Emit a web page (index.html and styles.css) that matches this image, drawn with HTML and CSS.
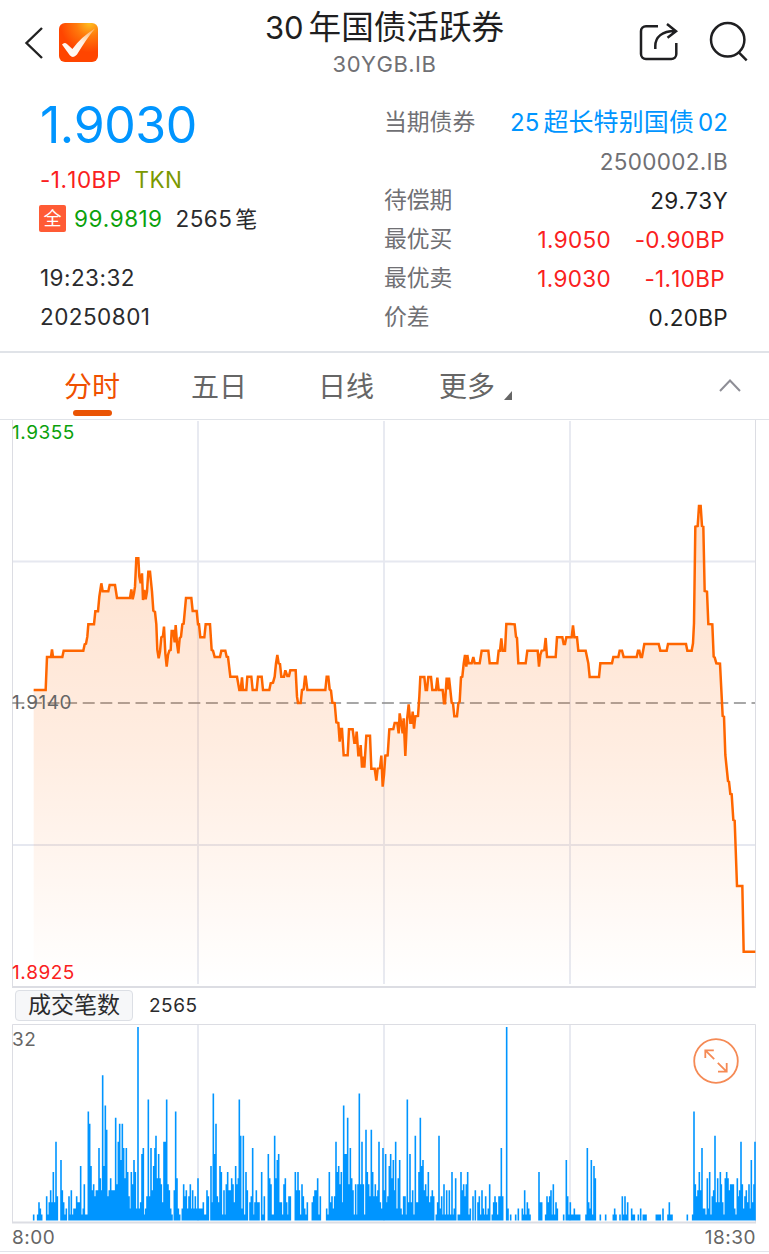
FILE: index.html
```html
<!DOCTYPE html>
<html lang="zh-CN">
<head>
<meta charset="utf-8">
<title>30年国债活跃券</title>
<link rel="stylesheet" href="styles.css">
</head>
<body>
<header class="topbar">
  <div class="nav-left">
    <svg class="back" viewBox="0 0 20 34"><path d="M18 2 2.5 17 18 32"/></svg>
    <svg class="logo" viewBox="0 0 39 39">
      <defs>
        <radialGradient id="logoBg" cx=".78" cy="0" r=".75"><stop offset="0" stop-color="#ffc020"/><stop offset=".45" stop-color="#ff7a0c"/><stop offset="1" stop-color="#ff4500"/></radialGradient>
        <linearGradient id="tick" x1="0" y1="1" x2=".8" y2="0"><stop offset="0" stop-color="#fff"/><stop offset=".6" stop-color="#fff0e4"/><stop offset="1" stop-color="#ffb870"/></linearGradient>
      </defs>
      <rect width="39" height="39" rx="6" fill="url(#logoBg)"/>
      <path d="M3 21.5Q5.5 18.6 8.2 21.2L13.4 26Q22 14 36 5.5 28 15 18 31.5Q14.2 36 10.8 32.3Z" fill="url(#tick)"/>
    </svg>
  </div>
  <div class="heading">
    <h1 class="title"><span class="num">30</span>年国债活跃券</h1>
    <div class="code">30YGB.IB</div>
  </div>
  <div class="nav-right">
    <svg class="share" viewBox="0 0 40 40"><path d="M19 4.2H7A5 5 0 0 0 2 9.2V32A5 5 0 0 0 7 37H32.3A5 5 0 0 0 37.3 32V21M16.3 27V24C16.3 15 23 9 36 9M28 2 37 9.2 28.5 15.8"/></svg>
    <svg class="search" viewBox="0 0 40 40"><circle cx="18.7" cy="17.8" r="16.7"/><path d="M29.5 30.2 37.7 38.4"/></svg>
  </div>
</header>

<section class="quote">
  <div class="summary">
    <div class="price">1.9030</div>
    <div class="row change"><span class="red">-1.10BP</span><span class="olive">TKN</span></div>
    <div class="row deals"><span class="badge">全</span><span class="green">99.9819</span><span class="count">2565<span class="cjk">笔</span></span></div>
    <div class="row time">19:23:32</div>
    <div class="row date">20250801</div>
  </div>
  <div class="details">
    <div class="line"><span class="label">当期债券</span><span class="bond">25<span class="bond-name">超长特别国债</span>02</span></div>
    <div class="line end"><span class="value muted">2500002.IB</span></div>
    <div class="line"><span class="label">待偿期</span><span class="value">29.73Y</span></div>
    <div class="line bid"><span class="label">最优买</span><span class="value rate">1.9050</span><span class="value bp">-0.90BP</span></div>
    <div class="line bid"><span class="label">最优卖</span><span class="value rate">1.9030</span><span class="value bp">-1.10BP</span></div>
    <div class="line"><span class="label">价差</span><span class="value">0.20BP</span></div>
  </div>
</section>

<nav class="tabs">
  <a class="tab active">分时</a>
  <a class="tab">五日</a>
  <a class="tab">日线</a>
  <a class="tab more">更多<svg class="corner" viewBox="0 0 8 9"><path d="M8 0V9H0Z"/></svg></a>
  <svg class="collapse" viewBox="0 0 22 13"><path d="M1 12 11 1.5 21 12"/></svg>
</nav>

<section class="price-chart">
  <svg class="plot" viewBox="0 419 769 570">
    <defs><linearGradient id="area" gradientUnits="userSpaceOnUse" x1="0" y1="505" x2="0" y2="985"><stop offset="0" stop-color="#ff6600" stop-opacity=".2"/><stop offset=".5" stop-color="#ff6600" stop-opacity=".12"/><stop offset="1" stop-color="#ff6600" stop-opacity="0"/></linearGradient></defs>
    <path class="grid" d="M13 561.5H755M13 845H755M198 421V984M384 421V984M570 421V984"/>
    <path class="frame" d="M12.5 420V987M755.5 420V987"/>
    <path class="frame thick" d="M12 987H756"/>
    <path class="baseline" d="M12.3 703H755"/>
    <path id="fill" fill="url(#area)"/>
    <path id="line" class="price-line"/>
  </svg>
  <span class="axis high">1.9355</span>
  <span class="axis mid">1.9140</span>
  <span class="axis low">1.8925</span>
</section>

<div class="indicator"><span class="chip">成交笔数</span><span class="total">2565</span></div>

<section class="volume-chart">
  <svg class="plot" viewBox="0 1024 769 200">
    <path class="grid" d="M198 1025V1221M384 1025V1221M570 1025V1221"/>
    <path class="frame" d="M12.5 1222V1024.5H755.5V1222"/>
    <path id="bars" class="bars"/>
    <path class="frame thick" d="M12 1222.5H756"/>
  </svg>
  <span class="axis peak">32</span>
  <svg class="expand" viewBox="0 0 46 46"><circle cx="23" cy="23" r="21.8"/><path d="M21.2 21.2 12.6 12.6M12.3 20V12.3H20.8M24.8 24.8 33.4 33.4M33.7 25V33.7H25"/></svg>
</section>

<footer class="hours"><span>8:00</span><span>18:30</span></footer>
<script src="chart.js"></script>
</body>
</html>
```
FILE: styles.css
```css
* { box-sizing: border-box; }
body {
  margin: 0;
  width: 769px;
  height: 1254px;
  overflow: hidden;
  background: #fff;
  color: #2b2b2d;
  font: 22.5px/39px Inter, "Noto Sans CJK SC", sans-serif;
  font-kerning: none;
  white-space: nowrap;
}
svg { display: block; flex: none; overflow: visible; }
.topbar { display: grid; grid-template-columns: 1fr 300px 1fr; height: 90px; }
.nav-left { display: flex; align-items: flex-start; gap: 15px; padding: 23px 0 0 24px; }
.back { width: 20px; height: 34px; margin-top: 3px; fill: none; stroke: #222; stroke-width: 2.4; }
.logo { width: 39px; height: 39px; }
.heading { text-align: center; padding-top: 5px; }
.title { margin: 0; font: 400 32.6px/44px Inter, "Noto Sans CJK SC", sans-serif; color: #1f1f21; }
.title .num { font-size: 31px; margin-right: 5px; }
.code { color: #707074; font-size: 22px; line-height: 28px; letter-spacing: .5px; }
.nav-right { display: flex; justify-content: flex-end; gap: 30px; padding: 22px 20px 0 0; }
.share, .search { width: 40px; height: 40px; fill: none; stroke: #1f1f21; stroke-width: 2.5; }

.quote { display: grid; grid-template-columns: 344px 344px; padding-left: 40px; height: 261px; }
.price { font-size: 50px; line-height: 60px; padding-top: 5px; color: #0095ff; height: 70px; letter-spacing: -.5px; }
.row { display: flex; height: 39px; align-items: center; letter-spacing: .45px; }
.red { color: #fa2020; }
.olive { color: #7b9900; margin-left: 13px; }
.green { color: #0ba10b; margin-left: 8px; }
.count { margin-left: 13px; }
.cjk { font-size: 22px; margin-left: 3px; }
.badge { width: 27px; height: 27px; line-height: 27px; border-radius: 2px; background: #ff5b35; color: #fff; font-size: 18px; text-align: center; margin-left: -1px; letter-spacing: 0; }
.time { margin-top: 20px; }
.details { padding-top: 12px; }
.line { display: flex; justify-content: space-between; height: 39.1px; line-height: 39px; color: #222; }
.line.end { justify-content: flex-end; }
.label { color: #707074; font-size: 22.8px; }
.bond { color: #0095ff; font-size: 24px; letter-spacing: .1px; padding-top: 1px; }
.bond-name { font-size: 25px; margin: 0 4px; }
.value { padding-top: 1px; letter-spacing: .3px; }
.muted { color: #707074; }
.line.bid { color: #fa2020; padding-right: 3px; }
.rate { margin-left: auto; }
.bp { width: 114px; text-align: right; }

.tabs { display: flex; height: 69px; border-top: 2px solid #e0e3e8; border-bottom: 1px solid #e0e3e8; padding-left: 64px; gap: 71px; color: #666; font-size: 28px; line-height: 68px; }
.tab { position: relative; }
.active { color: #f05000; }
.active::after { content: ""; position: absolute; left: 9px; top: 57px; width: 39px; height: 6px; border-radius: 3px; background: #ea5404; }
.more { display: flex; margin-left: -6px; }
.corner { width: 8px; height: 9px; margin: 38px 0 0 9px; fill: #666; }
.collapse { width: 22px; height: 13px; margin: 26px 28px 0 auto; fill: none; stroke: #8e8e96; stroke-width: 2; }

.price-chart { position: relative; height: 568px; margin-top: -1px; }
.plot { width: 769px; }
.price-chart .plot { height: 570px; }
.grid { fill: none; stroke: #e6e8f0; stroke-width: 1.8; }
.frame { fill: none; stroke: #dcdde3; stroke-width: 1; }
.thick { stroke-width: 2; }
.baseline { stroke: #8a8a8a; stroke-width: 1.6; stroke-dasharray: 12 5.6; }
.price-line { fill: none; stroke: #ff6600; stroke-width: 2.5; stroke-linejoin: miter; stroke-miterlimit: 3; }
.axis { position: absolute; left: 12px; font-size: 19px; line-height: 24px; letter-spacing: .5px; color: #666; }
.high { top: 2px; color: #0ba10b; }
.mid { top: 272px; }
.low { top: 542px; color: #fa2020; }

.indicator { display: flex; align-items: center; height: 37px; padding: 0 0 1px 15px; }
.chip { width: 118px; height: 31px; border: 1px solid #dcdfe5; border-radius: 4px; background: #f6f7f9; font-size: 23px; line-height: 29px; text-align: center; }
.total { margin-left: 16px; padding-top: 1px; font-size: 19px; letter-spacing: .5px; }
.volume-chart { position: relative; height: 199px; }
.volume-chart .plot { height: 200px; }
.bars { stroke: #0095ff; stroke-width: 1.6; }
.peak { top: 4px; }
.expand { position: absolute; left: 693px; top: 14px; width: 46px; height: 46px; fill: none; stroke: #f58a55; stroke-width: 1.8; }
.hours { display: flex; justify-content: space-between; height: 29px; padding: 0 13px 0 12px; border-bottom: 1px solid #e2e3ea; font-size: 19px; line-height: 30px; letter-spacing: .5px; color: #666; }
```
FILE: chart.js
```js
// Samples are stored in thirds of a pixel, relative to each segment's origin.
const SCALE = 3;

const priceSegments = [
  [0, 480, "101,630 137,630 141,531 153,531 156,508 159,531 187,531 191,512 250,512 254,493 258,491 262,470 265,433 282,433 286,394 294,394 298,350 304,310 308,334 325,334 329,315 345,315 351,354 390,354 394,328 398,358 402,340 405,320 409,235 415,235 418,290 422,310 426,280 429,360 433,330 437,358 441,335 445,275 450,275 456,335 460,392 465,396 469,433 472,510 476,535 480,515 484,472 489,468 492,440 496,520 500,560 504,525 508,512 512,510 515,453 520,453 524,487 527,435 531,490 535,520 539,475 543,470 547,433 551,431 558,354 574,354 578,393 590,393 594,433 597,433 601,472 613,472 617,433 630,433 635,510 639,512 644,531 660,531 664,512 676,512 680,530 684,531 691,590 711,590 718,630 722,630 726,592 729,630 739,630 742,590 749,590"],
  [250, 600, "0,230 4,230 8,270 20,270 24,230 35,230 39,270 58,270 62,250 69,248 74,230 78,190 82,165 86,190 90,192 94,230 102,230 106,211 112,228 117,228 121,211 137,211 141,290 144,309 152,309 156,270 161,268 165,230 167,230 172,270 226,270 230,230 235,230 239,268 243,272 247,308 254,309 259,367 265,369 269,425 273,387 276,387 281,466 293,466 297,388 308,388 313,428 317,428 320,395 325,466 329,466 332,435 336,503 339,470 343,503 349,407 360,407 364,506 374,506 379,542 383,506 390,504 394,467 398,560 402,525 406,467 413,466 418,388 430,387 434,369 442,369 446,400 449,340 454,372 458,400 461,355 466,468 471,360 476,313 481,368 485,368 488,335 492,386 496,349 504,348 508,290 511,231 523,231 527,270 531,270 535,231 543,231 547,270 558,270 562,233 566,270 578,270 582,310 585,310 590,233 593,268 597,233 601,270 605,308 609,310 613,349 621,349 625,310 629,305 633,232 637,230 641,192 645,165 649,200 652,165 656,190 665,190 670,171 674,190 689,190 695,152 715,152 719,190 742,190 746,152 750,152 754,115 758,152 765,152 769,72 780,72"],
  [440, 600, "224,73 228,110 231,114 235,190 257,190 262,152 293,152 297,200 301,165 305,152 313,150 317,114 321,171 347,171 351,112 367,112 371,132 375,132 379,112 395,112 399,76 403,112 411,112 415,152 437,152 445,190 449,231 477,231 481,190 516,190 520,171 535,171 539,152 546,152 551,171 590,171 594,152 598,152 602,171 606,171 613,132 656,132 661,152 680,152 684,132 738,132 742,152"],
  [640, 490, "155,482 159,460 162,400 166,110 173,108 177,48 182,48 186,108 190,110 194,303 201,305 205,402 217,403 221,500 224,502 229,520 240,521 248,678 252,680 256,795 264,873 267,875 271,912 275,913 280,990 284,992 291,1188 307,1188 311,1385 346,1385"]
];

const dealSegments = [
  [0, "101,1 113,1 117,3 121,2 125,1 140,4 144,1 148,3 152,5 156,3 160,8 164,3 168,13 172,4 183,10 187,5 191,3 195,1 199,2 207,4 211,1 214,5 218,1 222,2 226,2 230,4 234,3 238,3 242,9 246,1 250,2 253,6 257,1 261,1 265,18 269,16 273,9 277,5 281,6 285,4 289,5 293,5 297,12 301,7 304,5 308,24 312,9 316,19 320,15 324,4 328,5 332,7 336,5 340,5 344,5 347,17 351,6 355,13 359,16 363,10 367,16 371,12 375,7 379,12 383,8 387,4 391,2 394,8 398,6 402,10 406,8 410,2 414,32 418,2 422,3 426,11 430,12 434,1 437,2 441,4 445,20 449,4 453,12 457,5 461,9 465,12 468,14 472,7 476,11 480,7 484,6 488,3 492,13 496,13 500,20 504,6 508,5 512,2 516,1 523,5 527,18 531,7 535,2 539,1 547,2 551,6 555,4 559,5 563,2 567,4"],
  [190, "1,6 5,2 8,5 12,2 16,4 20,2 24,7 28,2 32,2 36,2 40,3 44,1 48,1 51,5 55,4 63,9 67,3 70,21 74,11 78,16 82,4 86,3 90,9 94,8 98,1 102,5 106,1 109,6 113,8 117,5 121,5 125,7 129,6 133,3 137,9 141,6 145,7 148,20 152,14 156,2 160,14 164,1 168,8 172,5 180,3 184,4 188,12 192,1 195,3 199,5 203,3 207,3 215,8 219,1 223,4 235,11 239,7 243,6 247,1 250,1 254,14 258,7 262,10 266,11 270,3 274,3 278,1 282,6 286,7 290,3 294,1 297,4 301,4 316,8 320,5 324,8 328,5 332,1 336,6 340,4 344,2 348,1 352,3 367,3 371,4 375,5 379,5 383,7 387,1 391,4 410,2 414,1 418,8 422,3 426,4 430,2 434,4 438,13 442,8 446,9 450,6 454,8 458,3 461,19 465,11 469,11 473,17 477,6 481,12 485,7 489,5 493,1 497,6 501,1 504,6 508,21 512,6 516,13 520,6 524,1 528,15 532,8 536,6 540,4 544,15 548,8 552,4 556,6 560,4 564,5 567,13 571,3 575,2 579,12 583,5 587,11"],
  [380, "20,3 24,4 28,9 32,11 36,7 40,10 44,5 47,13 51,2 55,7 59,10 63,2 67,1 71,4 75,4 79,1 82,20 86,3 90,11 94,3 98,5 102,1 106,14 110,3 114,3 117,8 121,17 125,9 129,10 133,5 137,6 141,4 145,8 149,3 153,4 157,5 161,4 169,1 173,3 177,14 181,2 185,4 189,1 192,6 196,1 200,5 204,1 208,5 212,1 216,8 220,1 223,2 227,7 235,1 239,1 243,8 247,5 251,6 255,4 259,6 263,8 267,1 271,2 279,4 286,5 294,3 298,4 302,1 306,5 310,2 314,1 317,4 321,1 325,2 329,6 337,1 341,3 345,4 349,3 353,1 357,4 361,4 364,12 368,4 380,32 384,2 392,1 407,1 415,2 427,2 431,1 434,5 438,1 442,3 446,2 450,1 477,8 481,3 485,3 497,1 501,4 505,3 509,4 513,5 516,1 520,6 524,1 528,3 532,2 551,1 559,10 563,4 567,1"],
  [569, "4,3 8,1 12,1 16,2 20,1 24,1 28,1 32,1 51,1 55,12 59,3 63,2 67,10 71,1 75,9 79,7 94,1 110,1 133,1 137,2 141,1 153,1 160,4 164,1 168,4 172,1 176,3 188,2 192,1 196,1 208,1 215,2 223,1 227,1 231,1 262,1 266,1 270,1 274,1 282,2 297,1 301,3 305,1 309,1 355,1 371,1 375,18 379,6 383,4 387,5 391,8 395,5 399,12 403,2 407,2 411,1 415,7 419,2 422,8 426,1 430,4 434,5 438,14 442,3 446,7 450,3 454,8 457,6 461,3 465,1 469,7 473,8 477,7 481,5 485,6 489,6 493,6 497,2 501,1 505,7 509,4 512,5 516,13 520,6 524,2 528,4 532,5 536,3 540,6 544,2 547,10 551,3 555,6 558,13"]
];

const parse = text => text.split(" ").map(pair => pair.split(",").map(Number));

const line = "M" + priceSegments.flatMap(([x0, y0, text]) =>
  parse(text).map(([x, y]) => (x0 + x / SCALE).toFixed(2) + " " + (y0 + y / SCALE).toFixed(2))
).join("L");
document.getElementById("line").setAttribute("d", line);
document.getElementById("fill").setAttribute("d", line + "V986H33.7Z");

const BASE = 1220.5;
const UNIT = 6.05;
document.getElementById("bars").setAttribute("d", dealSegments.flatMap(([x0, text]) =>
  parse(text).map(([x, n]) => "M" + (x0 + x / SCALE).toFixed(2) + " " + BASE + "v" + (-n * UNIT).toFixed(2))
).join(""));
```
